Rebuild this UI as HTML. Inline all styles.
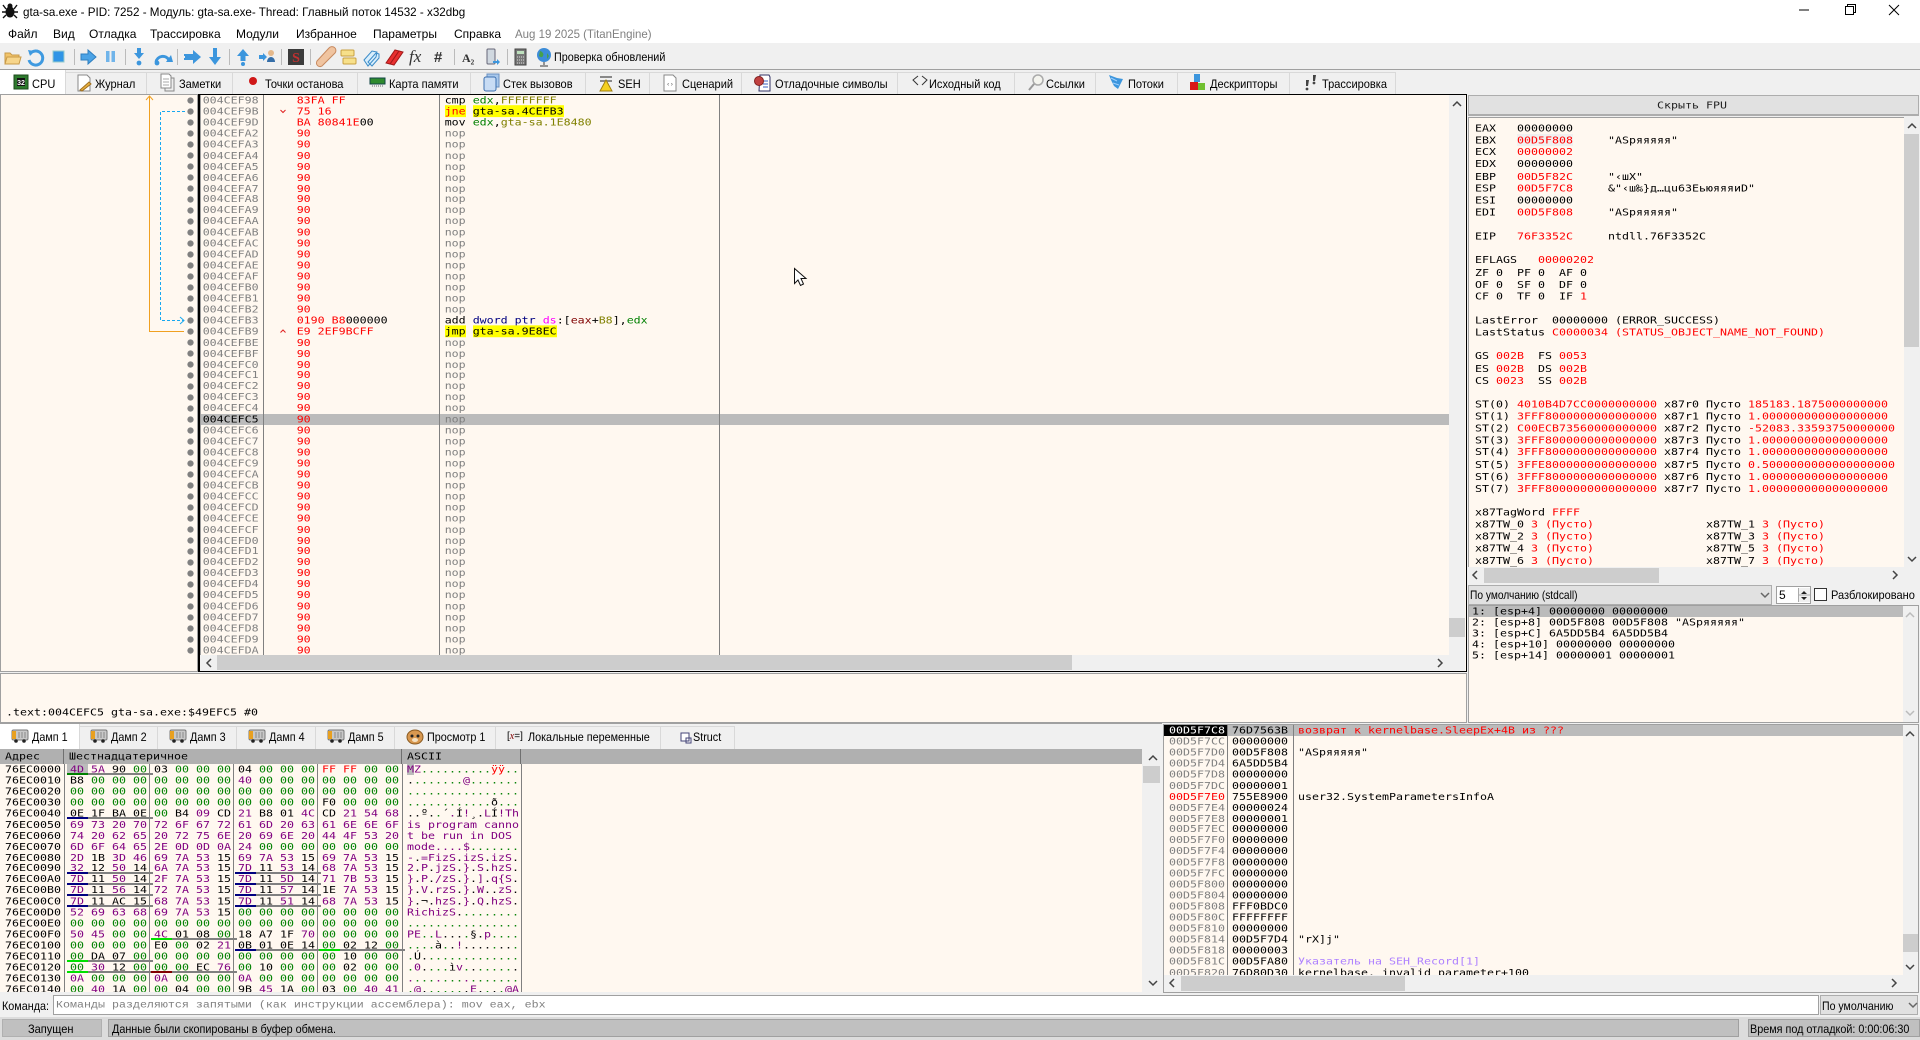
<!DOCTYPE html>
<html lang="ru"><head><meta charset="utf-8"><title>gta-sa.exe - x32dbg</title>
<style>
html,body{margin:0;padding:0;width:1920px;height:1040px;overflow:hidden;background:#f0f0f0}
div,span,pre{position:absolute;box-sizing:border-box;margin:0}
.t{font:12px/16px "Liberation Sans","Noto Sans CJK SC",sans-serif;color:#000;white-space:nowrap;transform-origin:0 0}
.c9{transform:scaleX(.9)}.c92{transform:scaleX(.92)}.c85{transform:scaleX(.85)}.c88{transform:scaleX(.88)}.c97{transform:scaleX(.97)}.c95{transform:scaleX(.955)}
pre{font:11.63px/12.94px "DejaVu Sans Mono","Liberation Mono",monospace;color:#000;white-space:pre;transform:scaleY(.85);transform-origin:0 0}
pre span,pre i,pre b,pre em,pre u,pre s{position:static;font-style:normal;font-weight:normal;text-decoration:none}
.p{background:#fff8f0}
i{color:#008000}b{color:#800080}em{color:#f00}u{color:#808080}s{color:#808000}
.v{background:#808080;width:1px}
.tab{background:#f0f0f0;border-top:1px solid #d9d9d9;border-right:1px solid #d9d9d9;top:72px;height:22px}
.dt{background:#f0f0f0;border-top:1px solid #d9d9d9;border-right:1px solid #d9d9d9;top:726px;height:23px}
.ul{height:2px;width:86px;background:#808080}
.n{background:linear-gradient(90deg,#000080 21px,#808080 21px)}
.l{background:linear-gradient(90deg,#00e000 21px,#808080 21px)}
.g{background:linear-gradient(90deg,#008000 21px,#808080 21px)}
.r{background:linear-gradient(90deg,#800000 21px,#808080 21px)}
.th{background:#b0b0b0;top:749px;height:15px}
.h{background:#cdcdcd}
.sb{background:#f0f0f0}
y{background:#ff0}
</style></head><body>

<div style="left:0;top:0;width:1920px;height:44px;background:#fff"></div>
<div style="left:0;top:43px;width:1920px;height:1px;background:#f0f0f0"></div>
<span class="t c97" style="left:23px;top:4px">gta-sa.exe - PID: 7252 - Модуль: gta-sa.exe- Thread: Главный поток 14532 - x32dbg</span>
<span class="t" style="left:8px;top:26px">Файл</span>
<span class="t" style="left:53px;top:26px">Вид</span>
<span class="t" style="left:89px;top:26px">Отладка</span>
<span class="t" style="left:150px;top:26px">Трассировка</span>
<span class="t" style="left:236px;top:26px">Модули</span>
<span class="t" style="left:296px;top:26px">Избранное</span>
<span class="t" style="left:373px;top:26px">Параметры</span>
<span class="t" style="left:454px;top:26px">Справка</span>
<span class="t c95" style="left:515px;top:26px;color:#808080">Aug 19 2025 (TitanEngine)</span>
<div style="left:0;top:69px;width:1920px;height:1px;background:#a0a0a0"></div>
<span class="t c9" style="left:554px;top:49px">Проверка обновлений</span>

<div class="tab" style="left:66px;width:81px"></div>
<div class="tab" style="left:147px;width:86px"></div>
<div class="tab" style="left:233px;width:125px"></div>
<div class="tab" style="left:358px;width:113px"></div>
<div class="tab" style="left:471px;width:115px"></div>
<div class="tab" style="left:586px;width:64px"></div>
<div class="tab" style="left:650px;width:92px"></div>
<div class="tab" style="left:742px;width:156px"></div>
<div class="tab" style="left:898px;width:117px"></div>
<div class="tab" style="left:1015px;width:81px"></div>
<div class="tab" style="left:1096px;width:82px"></div>
<div class="tab" style="left:1178px;width:112px"></div>
<div class="tab" style="left:1290px;width:106px"></div>
<div style="left:0;top:70px;width:66px;height:24px;background:#fff;border-right:1px solid #d9d9d9"></div>
<span class="t c92" style="left:32px;top:76px">CPU</span>
<span class="t c92" style="left:95px;top:76px">Журнал</span>
<span class="t c92" style="left:179px;top:76px">Заметки</span>
<span class="t c92" style="left:265px;top:76px">Точки останова</span>
<span class="t c92" style="left:389px;top:76px">Карта памяти</span>
<span class="t c92" style="left:503px;top:76px">Стек вызовов</span>
<span class="t c92" style="left:618px;top:76px">SEH</span>
<span class="t c92" style="left:682px;top:76px">Сценарий</span>
<span class="t c92" style="left:775px;top:76px">Отладочные символы</span>
<span class="t c92" style="left:929px;top:76px">Исходный код</span>
<span class="t c92" style="left:1046px;top:76px">Ссылки</span>
<span class="t c92" style="left:1128px;top:76px">Потоки</span>
<span class="t c92" style="left:1210px;top:76px">Дескрипторы</span>
<span class="t c92" style="left:1322px;top:76px">Трассировка</span>

<!-- left branch pane -->
<div class="p" style="left:0;top:94px;width:198px;height:578px;border:1px solid #a0a0a0;border-top-color:#a0a0a0"></div>
<div style="left:185px;top:95px;width:11px;height:561px;background:radial-gradient(circle at 5.5px 5.5px,#808080 2.8px,transparent 3.4px) 0 0/11px 11px"></div>
<!-- disasm -->
<div class="p" style="left:198px;top:94px;width:1269px;height:578px;border:1px solid #000;border-width:1px 1px 1px 2px"></div>
<div style="left:200px;top:414px;width:1249px;height:11px;background:#bbb"></div>
<div class="v" style="left:200px;top:95px;height:560px;background:#a0a0a0"></div>
<div class="v" style="left:263px;top:95px;height:560px"></div>
<div class="v" style="left:439px;top:95px;height:560px"></div>
<div class="v" style="left:719px;top:95px;height:560px"></div>
<div style="left:200px;top:95px;width:1249px;height:560px;overflow:hidden">
<pre style="left:2.7px;top:0;color:#808080">004CEF98
004CEF9B
004CEF9D
004CEFA2
004CEFA3
004CEFA4
004CEFA5
004CEFA6
004CEFA7
004CEFA8
004CEFA9
004CEFAA
004CEFAB
004CEFAC
004CEFAD
004CEFAE
004CEFAF
004CEFB0
004CEFB1
004CEFB2
004CEFB3
004CEFB9
004CEFBE
004CEFBF
004CEFC0
004CEFC1
004CEFC2
004CEFC3
004CEFC4
<span style="color:#000">004CEFC5</span>
004CEFC6
004CEFC7
004CEFC8
004CEFC9
004CEFCA
004CEFCB
004CEFCC
004CEFCD
004CEFCE
004CEFCF
004CEFD0
004CEFD1
004CEFD2
004CEFD3
004CEFD4
004CEFD5
004CEFD6
004CEFD7
004CEFD8
004CEFD9
004CEFDA</pre>
<pre style="left:96.7px;top:0;color:#f00">83FA FF
75 16
BA 80841E<span style="color:#000">00</span>
90
90
90
90
90
90
90
90
90
90
90
90
90
90
90
90
90
0190 B8<span style="color:#000">000000</span>
E9 2EF9BCFF
90
90
90
90
90
90
90
90
90
90
90
90
90
90
90
90
90
90
90
90
90
90
90
90
90
90
90
90
90</pre>
<pre style="left:244.7px;top:0;color:#808080"><span style="color:#000">cmp</span> <i>edx</i><span style="color:#000">,</span><s>FFFFFFFF</s>
<y><em>jne</em></y> <y><span style="color:#000">gta-sa.4CEFB3</span></y>
<span style="color:#000">mov</span> <i>edx</i><span style="color:#000">,</span><s>gta-sa.1E8480</s>
nop
nop
nop
nop
nop
nop
nop
nop
nop
nop
nop
nop
nop
nop
nop
nop
nop
<span style="color:#000">add</span> <span style="color:#000080">dword ptr</span> <span style="color:#f0f">ds</span><span style="color:#000">:[</span><span style="color:#800000">eax</span><span style="color:#000">+</span><s>B8</s><span style="color:#000">],</span><i>edx</i>
<y><span style="color:#000">jmp</span></y> <y><span style="color:#000">gta-sa.9E8EC</span></y>
nop
nop
nop
nop
nop
nop
nop
nop
nop
nop
nop
nop
nop
nop
nop
nop
nop
nop
nop
nop
nop
nop
nop
nop
nop
nop
nop
nop
nop</pre>
</div>
<div class="sb" style="left:1449px;top:95px;width:16px;height:560px"></div>
<div class="h" style="left:1449px;top:618px;width:16px;height:19px"></div>
<div class="sb" style="left:200px;top:655px;width:1265px;height:16px"></div>
<div class="h" style="left:217px;top:655px;width:855px;height:15px"></div>

<!-- info box -->
<div class="p" style="left:0;top:673px;width:1467px;height:50px;border:1px solid #a0a0a0"></div>
<pre style="left:6px;top:707px">.text:004CEFC5 gta-sa.exe:$49EFC5 #0</pre>

<!-- FPU -->
<div style="left:1468px;top:95px;width:451px;height:21px;background:#e1e1e1;border:1px solid #adadad;border-bottom-width:2px"></div>
<pre style="left:1657px;top:100px;color:#222">Скрыть FPU</pre>
<div class="p" style="left:1468px;top:117px;width:436px;height:450px;border:1px solid #a0a0a0;border-width:1px 0 0 1px"></div>
<div style="left:1517px;top:134px;width:56px;height:12px;background:#f0f0f0"></div>
<div class="sb" style="left:1904px;top:117px;width:15px;height:450px"></div>
<div class="h" style="left:1904px;top:134px;width:15px;height:213px"></div>
<pre style="left:1475px;top:122px;line-height:14.118px">EAX   00000000
EBX   <em>00D5F808</em>     "ASpяяяяя"
ECX   <em>00000002</em>
EDX   00000000
EBP   <em>00D5F82C</em>     "‹шX"
ESP   <em>00D5F7C8</em>     &amp;"‹ш‰}д…цu63EьюяяяиD"
ESI   00000000
EDI   <em>00D5F808</em>     "ASpяяяяя"

EIP   <em>76F3352C</em>     ntdll.76F3352C

EFLAGS   <em>00000202</em>
ZF 0  PF 0  AF 0
OF 0  SF 0  DF 0
CF 0  TF 0  IF <em>1</em>

LastError  00000000 (ERROR_SUCCESS)
LastStatus <em>C0000034 (STATUS_OBJECT_NAME_NOT_FOUND)</em>

GS <em>002B</em>  FS <em>0053</em>
ES <em>002B</em>  DS <em>002B</em>
CS <em>0023</em>  SS <em>002B</em>

ST(0) <em>4010B4D7CC0000000000</em> x87r0 Пусто <em>185183.1875000000000</em>
ST(1) <em>3FFF8000000000000000</em> x87r1 Пусто <em>1.000000000000000000</em>
ST(2) <em>C00ECB73560000000000</em> x87r2 Пусто <em>-52083.33593750000000</em>
ST(3) <em>3FFF8000000000000000</em> x87r3 Пусто <em>1.000000000000000000</em>
ST(4) <em>3FFF8000000000000000</em> x87r4 Пусто <em>1.000000000000000000</em>
ST(5) <em>3FFE8000000000000000</em> x87r5 Пусто <em>0.5000000000000000000</em>
ST(6) <em>3FFF8000000000000000</em> x87r6 Пусто <em>1.000000000000000000</em>
ST(7) <em>3FFF8000000000000000</em> x87r7 Пусто <em>1.000000000000000000</em>

x87TagWord <em>FFFF</em>
x87TW_0 <em>3 (Пусто)</em>                x87TW_1 <em>3 (Пусто)</em>
x87TW_2 <em>3 (Пусто)</em>                x87TW_3 <em>3 (Пусто)</em>
x87TW_4 <em>3 (Пусто)</em>                x87TW_5 <em>3 (Пусто)</em>
x87TW_6 <em>3 (Пусто)</em>                x87TW_7 <em>3 (Пусто)</em></pre>
<div class="h" style="left:1484px;top:568px;width:175px;height:15px"></div>

<!-- call conv row -->
<div style="left:1468px;top:585px;width:304px;height:20px;background:#e1e1e1;border:1px solid #adadad"></div>
<span class="t c85" style="left:1470px;top:587px">По умолчанию (stdcall)</span>
<div style="left:1776px;top:586px;width:35px;height:18px;background:#fff;border:1px solid #a0a0a0"></div>
<span class="t" style="left:1779px;top:587px">5</span>
<div style="left:1798px;top:588px;width:12px;height:14px;background:#f0f0f0"></div>
<div style="left:1814px;top:588px;width:13px;height:13px;background:#fff;border:1px solid #333"></div>
<span class="t c92" style="left:1831px;top:587px">Разблокировано</span>

<!-- args -->
<div class="p" style="left:1468px;top:605px;width:451px;height:118px;border:1px solid #a0a0a0"></div>
<div style="left:1469px;top:606px;width:434px;height:11px;background:#bbb"></div>
<div class="sb" style="left:1903px;top:606px;width:15px;height:116px"></div>
<pre style="left:1472px;top:606px">1: [esp+4] 00000000 00000000
2: [esp+8] 00D5F808 00D5F808 "ASpяяяяя"
3: [esp+C] 6A5DD5B4 6A5DD5B4
4: [esp+10] 00000000 00000000
5: [esp+14] 00000001 00000001</pre>

<!-- dump tabs -->
<div style="left:0;top:723px;width:1162px;height:1px;background:#a0a0a0"></div>
<div class="dt" style="left:80px;width:78px"></div>
<div class="dt" style="left:158px;width:79px"></div>
<div class="dt" style="left:237px;width:79px"></div>
<div class="dt" style="left:316px;width:79px"></div>
<div class="dt" style="left:395px;width:101px"></div>
<div class="dt" style="left:496px;width:165px"></div>
<div class="dt" style="left:661px;width:74px"></div>
<div style="left:0;top:724px;width:80px;height:25px;background:#fff;border-right:1px solid #d9d9d9"></div>
<span class="t c9" style="left:32px;top:729px">Дамп 1</span>
<span class="t c9" style="left:111px;top:729px">Дамп 2</span>
<span class="t c9" style="left:190px;top:729px">Дамп 3</span>
<span class="t c9" style="left:269px;top:729px">Дамп 4</span>
<span class="t c9" style="left:348px;top:729px">Дамп 5</span>
<span class="t c9" style="left:427px;top:729px">Просмотр 1</span>
<span class="t" style="left:507px;top:729px;font-size:10px">[<span style="position:static;color:#800000;font-family:'Liberation Serif',serif;font-style:italic">x</span>=]</span>
<span class="t c9" style="left:528px;top:729px">Локальные переменные</span>
<span class="t c9" style="left:693px;top:729px">Struct</span>

<!-- dump -->
<div class="p" style="left:0;top:749px;width:1142px;height:243px"></div>
<div class="th" style="left:0;width:64px;border-right:1px solid #707070"></div>
<div class="th" style="left:64px;width:338px;border-right:1px solid #707070"></div>
<div class="th" style="left:402px;width:119px;border-right:1px solid #707070"></div>
<div class="th" style="left:521px;width:621px"></div>
<pre style="left:5px;top:751px">Адрес</pre>
<pre style="left:69px;top:751px">Шестнадцатеричное</pre>
<pre style="left:407px;top:751px">ASCII</pre>
<div class="v" style="left:64px;top:764px;height:228px"></div>
<div class="v" style="left:149px;top:764px;height:228px"></div>
<div class="v" style="left:233px;top:764px;height:228px"></div>
<div class="v" style="left:317px;top:764px;height:228px"></div>
<div class="v" style="left:402px;top:764px;height:228px"></div>
<div class="v" style="left:521px;top:764px;height:228px"></div>
<div style="left:67px;top:764px;width:21px;height:10px;background:#bbb"></div>
<div style="left:407px;top:764px;width:7px;height:11px;background:#bbb"></div>
<div style="left:0;top:764px;width:1142px;height:228px;overflow:hidden">
<pre style="left:5px;top:0">76EC0000
76EC0010
76EC0020
76EC0030
76EC0040
76EC0050
76EC0060
76EC0070
76EC0080
76EC0090
76EC00A0
76EC00B0
76EC00C0
76EC00D0
76EC00E0
76EC00F0
76EC0100
76EC0110
76EC0120
76EC0130
76EC0140</pre>
<pre style="left:70px;top:0"><b>4D 5A</b> 90 <i>00</i> 03 <i>00 00 00</i> 04 <i>00 00 00</i> <em>FF FF</em> <i>00 00</i>
B8 <i>00 00 00 00 00 00 00</i> <b>40</b> <i>00 00 00 00 00 00 00</i>
<i>00 00 00 00 00 00 00 00 00 00 00 00 00 00 00 00</i>
<i>00 00 00 00 00 00 00 00 00 00 00 00</i> F0 <i>00 00 00</i>
0E 1F BA 0E <i>00</i> B4 <b>09</b> CD <b>21</b> B8 01 <b>4C</b> CD <b>21 54 68</b>
<b>69 73 20 70 72 6F 67 72 61 6D 20 63 61 6E 6E 6F</b>
<b>74 20 62 65 20 72 75 6E 20 69 6E 20 44 4F 53 20</b>
<b>6D 6F 64 65 2E 0D 0D 0A 24</b> <i>00 00 00 00 00 00 00</i>
<b>2D</b> 1B <b>3D 46 69 7A 53</b> 15 <b>69 7A 53</b> 15 <b>69 7A 53</b> 15
<b>32</b> 12 <b>50</b> 14 <b>6A 7A 53</b> 15 <b>7D</b> 11 <b>53</b> 14 <b>68 7A 53</b> 15
<b>7D</b> 11 <b>50</b> 14 <b>2F 7A 53</b> 15 <b>7D</b> 11 <b>5D</b> 14 <b>71 7B 53</b> 15
<b>7D</b> 11 <b>56</b> 14 <b>72 7A 53</b> 15 <b>7D</b> 11 <b>57</b> 14 1E <b>7A 53</b> 15
<b>7D</b> 11 AC 15 <b>68 7A 53</b> 15 <b>7D</b> 11 <b>51</b> 14 <b>68 7A 53</b> 15
<b>52 69 63 68 69 7A 53</b> 15 <i>00 00 00 00 00 00 00 00</i>
<i>00 00 00 00 00 00 00 00 00 00 00 00 00 00 00 00</i>
<b>50 45</b> <i>00 00</i> <b>4C</b> 01 08 <i>00</i> 18 A7 1F <b>70</b> <i>00 00 00 00</i>
<i>00 00 00 00</i> E0 <i>00</i> 02 <b>21</b> 0B 01 0E 14 <i>00</i> 02 12 <i>00</i>
<i>00</i> DA 07 <i>00 00 00 00 00 00 00 00 00 00</i> 10 <i>00 00</i>
<i>00</i> <b>30</b> 12 <i>00 00 00</i> EC <b>76</b> <i>00</i> 10 <i>00 00 00</i> 02 <i>00 00</i>
<b>0A</b> <i>00 00 00</i> <b>0A</b> <i>00 00 00</i> <b>0A</b> <i>00 00 00 00 00 00 00</i>
<i>00</i> <b>40</b> 1A <i>00 00</i> 04 <i>00 00</i> 9B <b>45</b> 1A <i>00</i> 03 <i>00</i> <b>40 41</b></pre>
<pre style="left:407px;top:0"><b>MZ</b><i>..........</i><em>ÿÿ</em><i>..</i>
.<i>.......</i><b>@</b><i>.......</i>
<i>................</i>
<i>............</i>ð<i>...</i>
..º.<i>.</i>´<b>.</b>Í<b>!</b>¸.<b>L</b>Í<b>!Th</b>
<b>is program canno</b>
<b>t be run in DOS </b>
<b>mode....$</b><i>.......</i>
<b>-</b>.<b>=FizS</b>.<b>izS</b>.<b>izS</b>.
<b>2</b>.<b>P</b>.<b>jzS</b>.<b>}</b>.<b>S</b>.<b>hzS</b>.
<b>}</b>.<b>P</b>.<b>/zS</b>.<b>}</b>.<b>]</b>.<b>q{S</b>.
<b>}</b>.<b>V</b>.<b>rzS</b>.<b>}</b>.<b>W</b>..<b>zS</b>.
<b>}</b>.¬.<b>hzS</b>.<b>}</b>.<b>Q</b>.<b>hzS</b>.
<b>RichizS</b>.<i>........</i>
<i>................</i>
<b>PE</b><i>..</i><b>L</b>...<i>.</i>§.<b>p</b><i>....</i>
<i>....</i>à<i>.</i>.<b>!</b>....<i>.</i>..<i>.</i>
<i>.</i>Ú.<i>.............</i>
<i>.</i><b>0</b>.<i>...</i>ì<b>v</b><i>.</i>.<i>.....</i>.
<b>.</b><i>...</i><b>.</b><i>...</i><b>.</b><i>.......</i>
<i>.</i><b>@</b>.<i>.....</i>.<b>E</b>.<i>.</i>.<i>.</i><b>@A</b></pre>
</div>
<div class="ul g" style="left:67px;top:773px"></div>
<div class="ul n" style="left:67px;top:817px"></div>
<div class="ul n" style="left:67px;top:872px"></div><div class="ul n" style="left:235px;top:872px"></div>
<div class="ul n" style="left:67px;top:883px"></div><div class="ul n" style="left:235px;top:883px"></div>
<div class="ul n" style="left:67px;top:894px"></div><div class="ul n" style="left:235px;top:894px"></div>
<div class="ul n" style="left:67px;top:905px"></div><div class="ul n" style="left:235px;top:905px"></div>
<div class="ul l" style="left:151px;top:938px"></div>
<div class="ul n" style="left:235px;top:949px"></div><div class="ul l" style="left:319px;top:949px"></div>
<div class="ul l" style="left:67px;top:960px"></div>
<div class="ul l" style="left:67px;top:971px"></div><div class="ul r" style="left:151px;top:971px"></div>
<div class="sb" style="left:1142px;top:749px;width:18px;height:243px"></div>
<div class="h" style="left:1143px;top:766px;width:17px;height:17px"></div>

<!-- stack -->
<div class="p" style="left:1163px;top:724px;width:756px;height:269px;border:1px solid #a0a0a0"></div>
<div style="left:1228px;top:725px;width:675px;height:11px;background:#bbb"></div>
<div style="left:1164px;top:725px;width:63px;height:11px;background:#000"></div>
<div class="v" style="left:1227px;top:725px;height:250px"></div>
<div class="v" style="left:1293px;top:725px;height:250px"></div>
<div style="left:1164px;top:725px;width:739px;height:250px;overflow:hidden">
<pre style="left:5px;top:0;color:#808080"><span style="color:#fff">00D5F7C8</span>
00D5F7CC
00D5F7D0
00D5F7D4
00D5F7D8
00D5F7DC
<em>00D5F7E0</em>
00D5F7E4
00D5F7E8
00D5F7EC
00D5F7F0
00D5F7F4
00D5F7F8
00D5F7FC
00D5F800
00D5F804
00D5F808
00D5F80C
00D5F810
00D5F814
00D5F818
00D5F81C
00D5F820</pre>
<pre style="left:68px;top:0">76D7563B
00000000
00D5F808
6A5DD5B4
00000000
00000001
755E8900
00000024
00000001
00000000
00000000
00000000
00000000
00000000
00000000
00000000
FFF0BDC0
FFFFFFFF
00000000
00D5F7D4
00000003
00D5FA80
76D80D30</pre>
<pre style="left:134px;top:0"><em>возврат к kernelbase.SleepEx+4B из ???</em>

"ASpяяяяя"



user32.SystemParametersInfoA












"rX]j"

<span style="color:#ae81ff">Указатель на SEH_Record[1]</span>
kernelbase._invalid_parameter+100</pre>
</div>
<div class="sb" style="left:1903px;top:725px;width:15px;height:250px"></div>
<div class="h" style="left:1903px;top:934px;width:15px;height:18px"></div>
<div class="sb" style="left:1164px;top:975px;width:754px;height:17px"></div>
<div class="h" style="left:1181px;top:976px;width:224px;height:15px"></div>

<!-- command -->
<span class="t c9" style="left:2px;top:998px">Команда:</span>
<div style="left:53px;top:995px;width:1766px;height:20px;background:#fff;border:1px solid #a0a0a0"></div>
<pre style="left:56px;top:1000px;color:#808080;font-family:'Liberation Mono',monospace;font-size:11.67px">Команды разделяются запятыми (как инструкции ассемблера): mov eax, ebx</pre>
<div style="left:1820px;top:995px;width:98px;height:20px;background:#e1e1e1;border:1px solid #adadad"></div>
<span class="t c88" style="left:1822px;top:998px">По умолчанию</span>

<!-- status -->
<div style="left:0;top:1017px;width:1920px;height:23px;background:#dcdcdc"></div>
<div style="left:2px;top:1019px;width:100px;height:18px;background:#c0c0c0;border:1px solid #b0b0b0"></div>
<span class="t c92" style="left:28px;top:1021px">Запущен</span>
<div style="left:108px;top:1019px;width:1631px;height:18px;background:#c0c0c0;border:1px solid #a0a0a0"></div>
<span class="t c9" style="left:112px;top:1021px">Данные были скопированы в буфер обмена.</span>
<div style="left:1748px;top:1019px;width:172px;height:18px;background:#c0c0c0;border:1px solid #a0a0a0"></div>
<span class="t c9" style="left:1750px;top:1021px">Время под отладкой: 0:00:06:30</span>

<!-- overlay graphics -->
<svg style="position:absolute;left:0;top:0" width="1920" height="1040" viewBox="0 0 1920 1040" fill="none">
<defs>
<g id="bus"><rect x="0" y="1" width="16" height="10" rx="1.5" fill="#c8c8c8" stroke="#777"/><rect x="0" y="2" width="4" height="8" fill="#e8a020"/><path d="M7 3v6M10 3v6M13 3v6" stroke="#888"/><circle cx="4" cy="12" r="1.8" fill="#222"/><circle cx="12" cy="12" r="1.8" fill="#222"/></g>
</defs>
<!-- title icon spider -->
<g transform="translate(2,3)" fill="#111" stroke="#111"><ellipse cx="8" cy="9" rx="4" ry="5"/><circle cx="8" cy="3" r="2"/><path d="M4 6L1 2M12 6l3-4M4 9H0M12 9h4M4 12l-3 3M12 12l3 3" stroke-width="1.4"/></g>
<!-- window controls -->
<path d="M1799 10h10" stroke="#000"/><rect x="1845.5" y="6.5" width="8" height="8" stroke="#000"/><path d="M1847.5 6.5v-2h8v8h-2" stroke="#000"/><path d="M1889 5l10 10M1899 5l-10 10" stroke="#000"/>

<!-- toolbar separators -->
<path d="M74.5 49v16M125.5 49v16M177.5 49v16M229.5 49v16M281.5 49v16M310.5 49v16M454.5 49v16M507.5 49v16" stroke="#bbb"/>
<!-- folder -->
<path d="M5 64V53h5l2 2h7v9z" fill="#f2c46a" stroke="#c89a48"/><path d="M5 64l2-7h14l-2 7z" fill="#f7d58a" stroke="#c89a48"/>
<!-- restart -->
<path d="M30 54a7 7 0 1 1-1 6" stroke="#3f9ae0" stroke-width="3"/><path d="M28 50l6 1-4 5z" fill="#3f9ae0"/>
<!-- stop -->
<rect x="53" y="51" width="11" height="11" fill="#2f95e6" stroke="#9cc"/>
<!-- run -->
<path d="M81 54h7v-4l8 7-8 7v-4h-7z" fill="#4ba3e6" stroke="#2f7fc0"/>
<!-- pause -->
<rect x="106" y="51" width="3.5" height="11" fill="#70b4ea"/><rect x="111.500" y="51" width="3.500" height="11" fill="#70b4ea"/>
<!-- step into -->
<path d="M137 48h4v5h3l-5 6-5-6h3z" fill="#3c96dd"/><circle cx="139" cy="63" r="2.4" fill="#3c96dd"/>
<!-- step over -->
<path d="M156 62a7 7 0 0 1 13-2" stroke="#3c96dd" stroke-width="3"/><path d="M166 62h7l-2-7z" fill="#3c96dd"/><circle cx="157" cy="63" r="2.400" fill="#3c96dd"/>
<!-- run to -->
<path d="M185 54h8v-4l8 7-8 7v-4h-8z" fill="#3c96dd"/><path d="M184 55h2M184 59h2" stroke="#3c96dd" stroke-width="2"/>
<path d="M213 48h4v9h4l-6 8-6-8h4z" fill="#3c96dd"/>
<!-- up -->
<path d="M243 49l6 7h-3.500v5h-5v-5H237z" fill="#3c96dd"/><circle cx="243" cy="64" r="2" fill="#3c96dd"/>
<!-- run & person -->
<path d="M259 55h4v-2l4 4-4 4v-2h-4z" fill="#3c96dd"/><circle cx="271" cy="53" r="3" fill="#e5b98c"/><path d="M267 62c0-3 2-5 4-5s4 2 4 5z" fill="#356ea8"/>
<!-- S -->
<rect x="288" y="49" width="16" height="16" fill="#3b3b3b"/><text x="296" y="62" text-anchor="middle" font-family="Liberation Serif,serif" font-weight="bold" font-size="14" fill="#c03030">S</text>
<!-- patch -->
<path d="M317 62l12-13a3.500 3.500 0 0 1 6 5l-12 12a3.500 3.500 0 0 1-6-4z" transform="translate(0,-1)" fill="#f0c4a0" stroke="#c88a60"/>
<!-- comment -->
<rect x="341" y="50" width="13" height="6" rx="1" fill="#f7e08a" stroke="#c8a040"/><rect x="343" y="58" width="13" height="6" rx="1" fill="#f7e08a" stroke="#c8a040"/>
<!-- labels -->
<path d="M364 60l8-9 5 1-1 5-8 9zM368 62l8-9 3 1 0 4-7 8z" fill="#d8eefc" stroke="#3c8cc8"/>
<!-- bookmarks -->
<path d="M386 63l9-13 4 1-9 13zM390 64l9-13 4 1-9 13z" fill="#e83030" stroke="#a01818"/>
<text x="409" y="62" font-family="Liberation Serif,serif" font-style="italic" font-size="17" fill="#333">fx</text>
<text x="434" y="62" font-family="Liberation Sans,sans-serif" font-weight="bold" font-size="15" fill="#333">#</text>
<text x="462" y="62" font-family="Liberation Serif,serif" font-weight="bold" font-size="12" fill="#333">A₂</text>
<!-- device -->
<rect x="487" y="49" width="8" height="15" rx="1" fill="#d0d8e0" stroke="#667"/><path d="M493 61h4v-2l3 3-3 3v-2h-4z" fill="#3c96dd"/>
<!-- calc -->
<rect x="515" y="49" width="11" height="16" fill="#777" stroke="#444"/><rect x="517" y="51" width="7" height="3" fill="#bde0bd"/><path d="M517 57h7M517 60h7M517 63h7" stroke="#ddd" stroke-dasharray="1 1"/>
<!-- globe -->
<circle cx="544" cy="55" r="7" fill="#3c8cd8"/><path d="M540 51c3 1 4 3 3 5s-3 1-4 0M547 53l2 3-2 3z" fill="#47a04a"/><path d="M544 62v3M540 66h8" stroke="#777" stroke-width="1.500"/>

<!-- tab icons -->
<rect x="14" y="75" width="14" height="14" fill="#2d7a2d" stroke="#1a4a1a"/><rect x="17" y="78" width="8" height="8" fill="#111"/><text x="21" y="85" text-anchor="middle" font-family="Liberation Sans,sans-serif" font-size="7" fill="#fff" font-weight="bold">32</text>
<path d="M78 75h9l3 3v13H78z" fill="#fff" stroke="#888"/><path d="M80 90l9-8 2 2-9 7z" fill="#e8b040" stroke="#a07020"/>
<path d="M165 78h9v13h-9z" fill="#eee" stroke="#888"/><path d="M161 74h8l2 2v12h-10z" fill="#fff" stroke="#888"/><path d="M163 79h6M163 82h6M163 85h6" stroke="#aaa"/>
<circle cx="253" cy="81" r="4" fill="#d01818"/>
<rect x="370" y="78" width="15" height="6" fill="#2e8a2e" stroke="#144"/><path d="M372 86h11" stroke="#666" stroke-dasharray="1 1"/>
<rect x="487" y="74" width="12" height="13" fill="#a8c8ec" stroke="#6a90c0"/><rect x="484" y="77" width="12" height="14" rx="2" fill="#c8dcf4" stroke="#3c70b0"/>
<path d="M600 77h12M600 81h12" stroke="#888" stroke-width="2"/><path d="M606 80l6 11h-12z" fill="#f4d020" stroke="#a08010"/>
<path d="M664 75h9l3 3v13h-12z" fill="#fff" stroke="#888"/><text x="670" y="86" text-anchor="middle" font-size="6" font-family="Liberation Mono,monospace" fill="#555">‹›</text>
<path d="M760 75h9l1 2v14h-11z" fill="#fff" stroke="#336"/><path d="M763 81h5M763 84h5M763 87h5" stroke="#3a60c0"/><circle cx="759" cy="81" r="4.500" fill="#c04040" stroke="#802020"/>
<path d="M920 77l-5 4 5 5M924 77l5 4-5 5" stroke="#333" transform="translate(-2,-1)"/>
<circle cx="1038" cy="80" r="5" fill="#f4f4ee" stroke="#aaa" stroke-width="1.500"/><path d="M1034 84l-5 6" stroke="#999" stroke-width="2"/>
<path d="M1109 75l8 3 6 1-3 6-2 4-4-3-3-6z" fill="#3c96dd"/><path d="M1111 78l6 3M1113 83l6 2" stroke="#a0d0ff"/>
<rect x="1194" y="74" width="6" height="8" fill="#3c96dd"/><rect x="1190" y="82" width="8" height="8" fill="#d81818"/><rect x="1198" y="83" width="7" height="7" fill="#70c030"/>
<path d="M1306 80l3 0-1 6h-2zM1313 75h3l-1 6h-2z" fill="#444"/><circle cx="1307" cy="89" r="1.400" fill="#444"/><circle cx="1314" cy="83" r="1.400" fill="#444"/>

<!-- dump icons -->
<use href="#bus" transform="translate(12,729)"/><use href="#bus" transform="translate(91,729)"/><use href="#bus" transform="translate(170,729)"/><use href="#bus" transform="translate(249,729)"/><use href="#bus" transform="translate(328,729)"/>
<ellipse cx="415" cy="737" rx="8" ry="7" fill="#d89850" stroke="#8a5a20"/><circle cx="412" cy="736" r="1.500" fill="#222"/><circle cx="418" cy="736" r="1.500" fill="#222"/><ellipse cx="415" cy="740" rx="3" ry="2" fill="#f4e0c0"/>
<path d="M681 733h8v8h-8zM686 738h5v5h-5z" stroke="#447" fill="#fff"/>

<!-- branch arrows -->
<path d="M149.500 96V331.500H184" stroke="#f0a020"/><path d="M146 100l3.500-4 3.500 4" stroke="#f0a020"/>
<path d="M185 111.500h-24.500V320.500H184" stroke="#18a8f0" stroke-dasharray="3 2"/><path d="M180 317l4 3.500-4 3.500" stroke="#18a8f0"/>
<path d="M280.500 110l2.500 2.500 2.500-2.500" stroke="#e02020"/><path d="M280.500 332.500l2.500-2.500 2.500 2.500" stroke="#e02020"/>

<!-- scroll chevrons -->
<g stroke="#444" stroke-width="1.500">
<path d="M1453 106l4-4 4 4"/>
<path d="M211 659l-4 4 4 4M1438 659l4 4-4 4"/>
<path d="M1908 128l4-4 4 4M1908 557l4 4 4-4"/>
<path d="M1477 571l-4 4 4 4M1893 571l4 4-4 4"/>
<path d="M1149 760l4-4 4 4M1149 981l4 4 4-4"/>
<path d="M1906 736l4-4 4 4M1906 965l4 4 4-4"/>
<path d="M1174 979l-4 4 4 4M1892 979l4 4-4 4"/>
<path d="M1761 593l4 4 4-4M1909 1003l4 4 4-4" stroke="#666"/>
</g>
<path d="M1906 617l4-4 4 4M1906 711l4 4 4-4" stroke="#bbb" stroke-width="1.500"/>
<path d="M1801 594l3-3 3 3zM1801 597l3 3 3-3z" fill="#222"/>
<path d="M1798.500 588v14M1798 595h12" stroke="#aaa"/>

<!-- mouse cursor -->
<path d="M794.500 268.500v15l3.500-3.500 2.500 5.500 3-1.500-2.500-5.500h5z" fill="#fff" stroke="#111"/>
</svg>
</body></html>
